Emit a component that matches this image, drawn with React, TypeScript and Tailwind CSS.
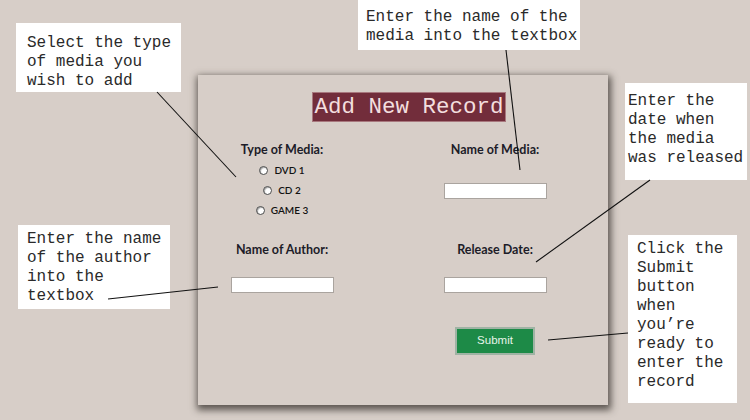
import React from 'react';

const mono = { fontFamily: '"Liberation Mono", "Courier New", monospace' };

const callouts = [
  { left: 16, top: 23, w: 165, h: 69, pl: 11, pt: 11, lines: ['Select the type', 'of media you', 'wish to add'] },
  { left: 358, top: 0, w: 222, h: 50, pl: 8, pt: 8, lines: ['Enter the name of the', 'media into the textbox'] },
  { left: 625, top: 83, w: 122, h: 97, pl: 3, pt: 9, lines: ['Enter the', 'date when', 'the media', 'was released'] },
  { left: 18, top: 225, w: 152, h: 84, pl: 9, pt: 5, lines: ['Enter the name', 'of the author', 'into the', 'textbox'] },
  { left: 628, top: 235, w: 109, h: 168, pl: 9, pt: 5, lines: ['Click the', 'Submit', 'button', 'when', 'you\u2019re', 'ready to', 'enter the', 'record'] },
];

const Radio = ({ label }: { label: string }) => (
  <label className="flex items-center gap-[6px] h-[20px]">
    <span className="w-[9px] h-[9px] rounded-full bg-white border border-[#4a4a4a] shadow-[inset_1px_1px_1px_rgba(0,0,0,0.35)]" />
    <span className="text-[10px] font-semibold text-[#111]">{label}</span>
  </label>
);

const Field = () => <div className="w-[103px] h-[16px] bg-white border border-[#aaa49f]" />;

const Label = ({ children }: { children: React.ReactNode }) => (
  <p className="h-[16px] leading-[16px] text-[12.5px] font-bold text-[#1c1c28] whitespace-nowrap">{children}</p>
);

export default function App() {
  return (
    <div className="relative w-[750px] h-[420px] overflow-hidden bg-[#d7cec8]" style={{ fontFamily: 'Lato, "Open Sans", sans-serif' }}>
      <div className="pl-[198px] pt-[75px]">
        <div className="w-[410px] h-[330px] bg-[#d7cec8] pt-[17px] shadow-[1px_3px_7px_2px_rgba(70,65,60,0.85)]">
          <div className="pl-[114px]">
            <div className="w-[194px] h-[30px] bg-[#722d3b] border border-[#a8787e] flex items-center justify-center">
              <span className="text-[22.5px] leading-none text-[#f3dede] whitespace-nowrap" style={mono}>Add New Record</span>
            </div>
          </div>

          <div className="grid grid-cols-[168px_170px] gap-x-[44px] mt-[20px]">
            <div className="h-[100px] flex flex-col items-center">
              <Label>Type of Media:</Label>
              <div className="mt-[2px] flex flex-col items-center">
                <Radio label="DVD 1" />
                <Radio label="CD 2" />
                <Radio label="GAME 3" />
              </div>
            </div>
            <div className="h-[100px] flex flex-col items-center">
              <Label>Name of Media:</Label>
              <div className="mt-[25px]"><Field /></div>
            </div>

            <div className="flex flex-col items-center">
              <Label>Name of Author:</Label>
              <div className="mt-[19px]"><Field /></div>
            </div>
            <div className="flex flex-col items-center">
              <Label>Release Date:</Label>
              <div className="mt-[19px]"><Field /></div>
              <button className="mt-[34px] w-[80px] h-[28px] bg-[#1d8a47] border-2 border-[#9fb3a4] text-[11.5px] text-[#e8f5ea]" style={{ fontFamily: '"Liberation Sans", Arial, sans-serif' }}>
                Submit
              </button>
            </div>
          </div>
        </div>
      </div>

      {callouts.map((c, i) => (
        <div
          key={i}
          className="absolute bg-white text-[16px] leading-[19px] text-[#2a2a2a] whitespace-pre"
          style={{ ...mono, left: c.left, top: c.top, width: c.w, height: c.h, paddingLeft: c.pl, paddingTop: c.pt }}
        >
          {c.lines.join('\n')}
        </div>
      ))}

      <svg className="absolute inset-0 pointer-events-none" width={750} height={420}>
        <g stroke="#111" strokeWidth={1.1}>
          <line x1={157} y1={92} x2={236} y2={177} />
          <line x1={506} y1={50} x2={520} y2={170} />
          <line x1={650} y1={180} x2={536} y2={262} />
          <line x1={108} y1={299} x2={218} y2={287} />
          <line x1={548} y1={340} x2={628} y2={333} />
        </g>
      </svg>
    </div>
  );
}
